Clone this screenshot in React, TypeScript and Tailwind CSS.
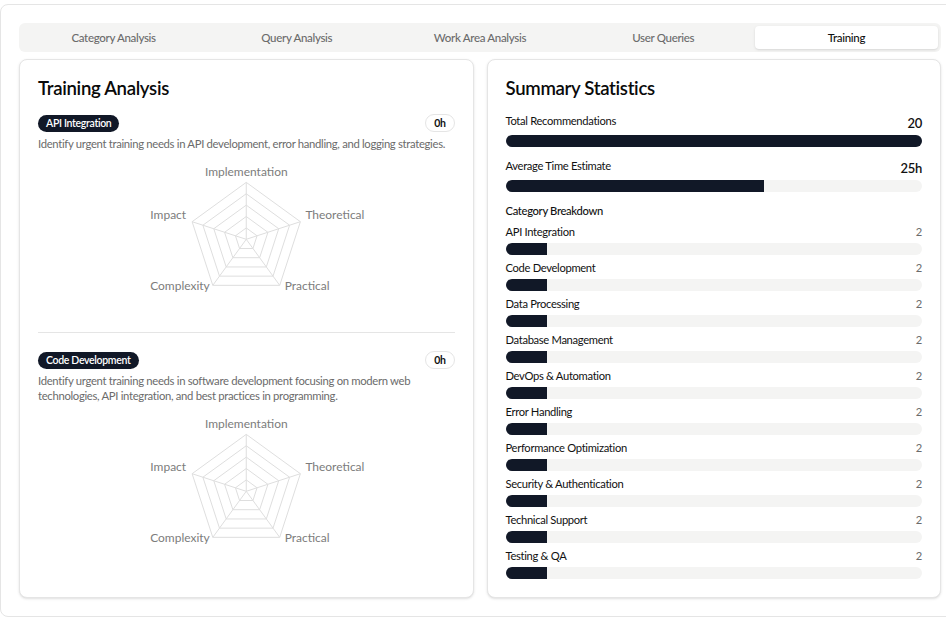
import React from "react";

const tabs = ["Category Analysis", "Query Analysis", "Work Area Analysis", "User Queries", "Training"];

const trainings = [
  {
    name: "API Integration",
    hours: "0h",
    description: "Identify urgent training needs in API development, error handling, and logging strategies.",
  },
  {
    name: "Code Development",
    hours: "0h",
    description:
      "Identify urgent training needs in software development focusing on modern web technologies, API integration, and best practices in programming.",
  },
];

const categories = [
  "API Integration",
  "Code Development",
  "Data Processing",
  "Database Management",
  "DevOps & Automation",
  "Error Handling",
  "Performance Optimization",
  "Security & Authentication",
  "Technical Support",
  "Testing & QA",
];

function RadarChart() {
  const cx = 208.5;
  const cy = 88.3;
  const R = 57;
  const angles = [-90, -18, 54, 126, 198].map((a) => (a * Math.PI) / 180);
  const point = (r: number, a: number) => [cx + r * Math.cos(a), cy + r * Math.sin(a)];
  const rings = [0.2, 0.4, 0.6, 0.8, 1].map((f) =>
    angles.map((a) => point(R * f, a).map((v) => v.toFixed(1)).join(",")).join(" ")
  );
  const v = angles.map((a) => point(R, a));

  return (
    <svg width="100%" height="172" viewBox="0 0 417 172" className="block">
      {rings.map((pts, i) => (
        <polygon key={i} points={pts} fill="none" stroke="#dedede" strokeWidth="1" />
      ))}
      {v.map(([x, y], i) => (
        <line key={i} x1={cx} y1={cy} x2={x} y2={y} stroke="#dedede" strokeWidth="1" />
      ))}
      <g fill="#7c7c7c" fontSize="12" letterSpacing="0" dominantBaseline="central">
        <text x={cx} y={v[0][1] - 11} textAnchor="middle">Implementation</text>
        <text x={v[1][0] + 5} y={v[1][1] - 7} textAnchor="start">Theoretical</text>
        <text x={v[2][0] + 5} y={v[2][1]} textAnchor="start">Practical</text>
        <text x={v[3][0] - 3} y={v[3][1]} textAnchor="end">Complexity</text>
        <text x={v[4][0] - 6} y={v[4][1] - 7} textAnchor="end">Impact</text>
      </g>
    </svg>
  );
}

function Bar({ pct, className = "" }: { pct: number; className?: string }) {
  return (
    <div className={`h-3 w-full rounded-full bg-[#f4f4f3] overflow-hidden ${className}`}>
      <div className="h-full bg-[#111827]" style={{ width: `${pct}%` }} />
    </div>
  );
}

export default function App() {
  return (
    <div className="w-[946px] h-[624px] overflow-hidden bg-white text-[#111] tracking-[-0.02em] font-['Lato',sans-serif]">
      <div className="mt-1 w-[960px] rounded-lg border border-[#e5e5e5] px-[18px] pt-[18px] pb-[18px]">
        <div className="grid grid-cols-5 h-[29px] rounded-md bg-[#f4f4f3] p-[3px]">
          {tabs.map((t) => (
            <div
              key={t}
              className={`flex items-center justify-center rounded text-[11.5px] ${
                t === "Training" ? "bg-white text-[#111] font-medium shadow-sm" : "text-[#6b6b6b] font-medium"
              }`}
            >
              {t}
            </div>
          ))}
        </div>

        <div className="mt-[7px] grid grid-cols-2 gap-[13px]">
          <div className="rounded-lg border border-[#e5e5e5] bg-white shadow-sm px-[18px] pt-[14px] pb-[18px]">
            <h2 className="text-[18.6px] leading-7 font-semibold text-[#0a0a0a]">Training Analysis</h2>
            <div className="mt-3">
              {trainings.map((t, i) => (
                <div key={t.name} className={i > 0 ? "mt-[9px] border-t border-[#e5e5e5] pt-[18px]" : ""}>
                  <div className="flex items-center justify-between">
                    <span className="h-[17px] rounded-full bg-[#111827] px-2 text-[10.5px] leading-[17px] font-semibold text-white">
                      {t.name}
                    </span>
                    <span className="h-[18px] rounded-full border border-[#e5e5e5] px-2 text-[10.5px] leading-[16px] font-bold text-[#111]">
                      {t.hours}
                    </span>
                  </div>
                  <p className="mt-[4px] text-[11.3px] leading-[15px] text-[#6b6b6b]">{t.description}</p>
                  <RadarChart />
                </div>
              ))}
            </div>
          </div>

          <div className="rounded-lg border border-[#e5e5e5] bg-white shadow-sm px-[18px] pt-[14px] pb-[18px]">
            <h2 className="text-[18.6px] leading-7 font-semibold text-[#0a0a0a]">Summary Statistics</h2>
            <div className="mt-[11px]">
              <div className="flex justify-between">
                <span className="text-[11.2px] leading-4">Total Recommendations</span>
                <span className="text-[13px] leading-5 font-semibold">20</span>
              </div>
              <Bar pct={100} className="mt-[2px]" />
            </div>
            <div className="mt-[11px]">
              <div className="flex justify-between">
                <span className="text-[11.2px] leading-4">Average Time Estimate</span>
                <span className="text-[13px] leading-5 font-semibold">25h</span>
              </div>
              <Bar pct={62} className="mt-[2px]" />
            </div>
            <h3 className="mt-[11px] text-[11.2px] leading-4 font-medium">Category Breakdown</h3>
            <div className="mt-[5px] flex flex-col gap-[5px]">
              {categories.map((c) => (
                <div key={c}>
                  <div className="flex justify-between text-[11.2px] leading-4">
                    <span>{c}</span>
                    <span className="text-[#6b6b6b]">2</span>
                  </div>
                  <Bar pct={10} className="mt-[3px]" />
                </div>
              ))}
            </div>
          </div>
        </div>
      </div>
    </div>
  );
}
